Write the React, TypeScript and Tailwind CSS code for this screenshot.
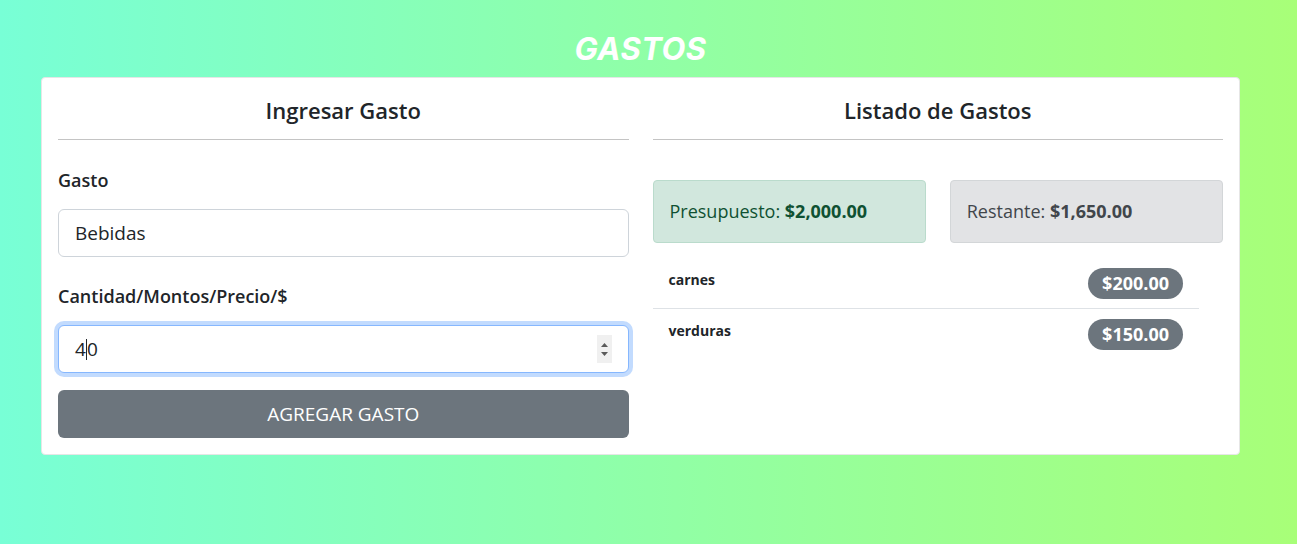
import React from 'react';

interface Gasto {
  nombre: string;
  cantidad: number;
}

const gastos: Gasto[] = [
  { nombre: 'carnes', cantidad: 200 },
  { nombre: 'verduras', cantidad: 150 },
];

const money = (n: number): string =>
  '$' + n.toLocaleString('en-US', { minimumFractionDigits: 2, maximumFractionDigits: 2 });

function Formulario(): JSX.Element {
  return (
    <div className="flex flex-col">
      <h2 className="h-[32px] flex items-center justify-center text-[22px] font-semibold text-[#212529]">
        Ingresar Gasto
      </h2>
      <hr className="mt-[13px] border-0 border-t border-[#c4c4c4]" />

      <label className="mt-[28px] h-6 leading-6 text-[18px] font-semibold text-[#212529]">Gasto</label>
      <input
        type="text"
        defaultValue="Bebidas"
        className="mt-[17px] h-[48px] w-full rounded-[6px] border border-[#ced4da] bg-white px-4 text-[19px] text-[#212529] outline-none"
      />

      <label className="mt-[27px] h-6 leading-6 text-[18px] font-semibold text-[#212529]">
        Cantidad/Montos/Precio/$
      </label>
      <div className="mt-[17px] h-[48px] w-full rounded-[6px] border border-[#86b7fe] bg-white pl-4 pr-4 flex items-center shadow-[0_0_0_4px_rgba(13,110,253,0.25)]">
        <span className="text-[19px] text-[#212529] flex items-center">
          4<span className="inline-block w-px h-[21px] bg-[#212529]" />0
        </span>
        <div className="ml-auto h-[28px] w-[15px] bg-[#f0f0f0] flex flex-col items-center justify-center gap-[5px]">
          <svg width="7" height="4" viewBox="0 0 7 4"><path d="M0 4 L3.5 0 L7 4 Z" fill="#5a5a5a" /></svg>
          <svg width="7" height="4" viewBox="0 0 7 4"><path d="M0 0 L3.5 4 L7 0 Z" fill="#5a5a5a" /></svg>
        </div>
      </div>

      <button
        type="button"
        className="mt-[17px] h-[48px] w-full rounded-[6px] bg-[#6c757d] text-white text-[19px] uppercase"
      >
        Agregar Gasto
      </button>
    </div>
  );
}

function Listado(): JSX.Element {
  return (
    <div className="flex flex-col">
      <h2 className="h-[32px] flex items-center justify-center text-[22px] font-semibold text-[#212529]">
        Listado de Gastos
      </h2>
      <hr className="mt-[13px] border-0 border-t border-[#c4c4c4]" />

      <div className="mt-[40px] grid grid-cols-2 gap-6">
        <div className="h-[63px] flex items-center rounded-[4px] border border-[#badbcc] bg-[#d1e7dd] px-4 text-[18px] text-[#0f5132]">
          Presupuesto:&nbsp;<span className="font-bold">{money(2000)}</span>
        </div>
        <div className="h-[63px] flex items-center rounded-[4px] border border-[#d3d6d8] bg-[#e2e3e5] px-4 text-[18px] text-[#41464b]">
          Restante:&nbsp;<span className="font-bold">{money(1650)}</span>
        </div>
      </div>

      <ul className="mt-[15px] mr-6">
        {gastos.map((g, i) => (
          <li
            key={g.nombre}
            className={
              'flex justify-between items-start px-4 pt-[10px] pb-[9px] ' +
              (i < gastos.length - 1 ? 'border-b border-[#dee2e6]' : '')
            }
          >
            <p className="mt-[1px] text-[14px] font-bold text-[#212529]">{g.nombre}</p>
            <span className="h-[31px] px-[14px] flex items-center rounded-full bg-[#6c757d] text-white text-[18px] font-bold">
              {money(g.cantidad)}
            </span>
          </li>
        ))}
      </ul>
    </div>
  );
}

export default function App(): JSX.Element {
  return (
    <div
      className="min-h-[544px] w-full bg-[linear-gradient(to_right,#78ffd6,#a8ff78)] pl-[41px] pr-[57px] pt-[32px]"
      style={{ fontFamily: '"Open Sans", "Noto Sans", sans-serif' }}
    >
      <h1 className="h-[34px] flex items-center justify-center text-[31px] font-bold italic text-white tracking-[0.5px] font-['Inter',sans-serif]">
        GASTOS
      </h1>
      <div className="mt-[11px] rounded-[4px] border border-[#e6e6e6] bg-white p-4">
        <div className="grid grid-cols-2 gap-6">
          <Formulario />
          <Listado />
        </div>
      </div>
    </div>
  );
}
